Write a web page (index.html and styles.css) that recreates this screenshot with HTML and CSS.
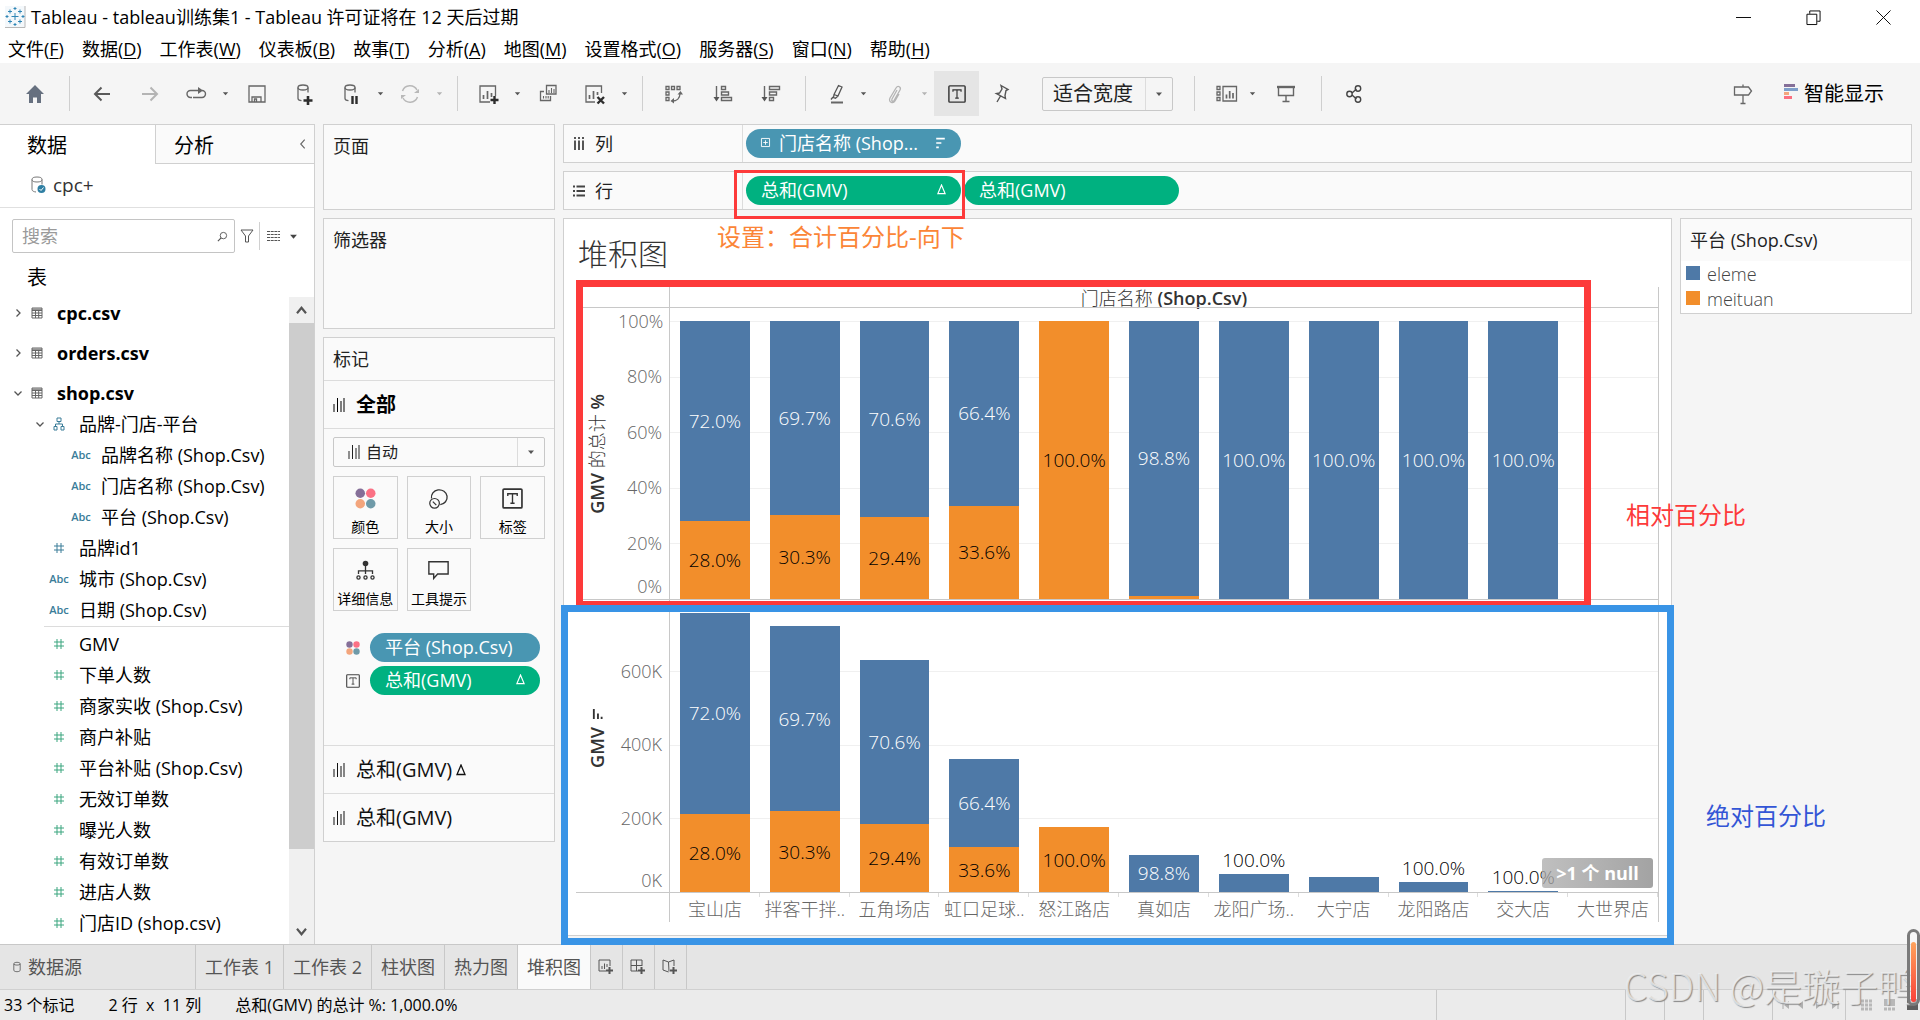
FILE: index.html
```html
<!DOCTYPE html>
<html lang="zh-CN">
<head>
<meta charset="utf-8">
<title>Tableau - tableau训练集1</title>
<link rel="stylesheet" href="styles.css">
</head>
<body>
<svg class="defs" aria-hidden="true">
  <symbol id="caret" viewBox="0 0 8 8"><path d="M1 2.500h6L4 6z" fill="currentColor"/></symbol>
  <symbol id="bars" viewBox="0 0 12 16"><path d="M1 7v8M4.500 1v14M8 4v11M11 1v14" stroke="currentColor" fill="none"/></symbol>
  <symbol id="hash" viewBox="0 0 12 12"><path d="M4 1v10M8 1v10M1 4h10M1 8h10" stroke="currentColor" fill="none"/></symbol>
  <symbol id="sheet" viewBox="0 0 12 12"><path d="M1 1h10v10H1zM1 3.500h10M1 6h10M1 8.500h10M4.500 3v8M7.700 3v8M1 2.200h10" stroke="#666" fill="none"/></symbol>
  <symbol id="chev-r" viewBox="0 0 10 10"><path d="M3.500 1.500L7 5 3.500 8.500" stroke="#555" fill="none" stroke-width="1.300"/></symbol>
  <symbol id="chev-d" viewBox="0 0 10 10"><path d="M1.500 3.500L5 7 8.500 3.500" stroke="#555" fill="none" stroke-width="1.300"/></symbol>
  <symbol id="dots" viewBox="0 0 22 22"><circle cx="5.500" cy="5.500" r="5" fill="#856f98"/><circle cx="16.500" cy="5.500" r="5" fill="#fb7185"/><circle cx="5.500" cy="16.500" r="5" fill="#f3a57c"/><circle cx="16.500" cy="16.500" r="5" fill="#6f9aa8"/></symbol>
  <symbol id="tbox" viewBox="0 0 20 20"><rect x="1" y="1" width="18" height="18" rx="1" fill="none" stroke="currentColor" stroke-width="1.600"/><path d="M5.500 7.500V5.500h9v2M10 5.500v9M8 14.500h4" fill="none" stroke="currentColor" stroke-width="1.300"/></symbol>
  <symbol id="delta" viewBox="0 0 10 12"><path d="M5 1L9 10.500H1z" fill="none" stroke="currentColor" stroke-width="1.300"/></symbol>
  <symbol id="bars-desc" viewBox="0 0 12 14"><path d="M1 2h10M1 7h6M1 12h3" stroke="currentColor" stroke-width="2" fill="none"/></symbol>
</svg>

<header class="titlebar">
  <svg class="logo" viewBox="0 0 20 22"><rect width="20" height="21" fill="#f4f8fb"/><path d="M20 0v21.500H0" fill="none" stroke="#b8b8b8"/><path d="M10 7v7M6.500 10.500h7M5 3.500v4M3 5.500h4M15 3.500v4M13 5.500h4M5 13.500v4M3 15.500h4M15 13.500v4M13 15.500h4M10 1v3M8.500 2.500h3M10 17v3M8.500 18.500h3M2 9v3M.500 10.500h3M18 9v3M16.500 10.500h3" stroke="#2f86b5" fill="none"/></svg>
  <h1 class="app-title">Tableau - tableau训练集1 - Tableau 许可证将在 12 天后过期</h1>
  <div class="window-buttons">
    <button aria-label="最小化"><svg viewBox="0 0 16 16"><path d="M0 8h16" stroke="#000" fill="none"/></svg></button>
    <button aria-label="还原"><svg viewBox="0 0 16 16"><path d="M1 4.500h10.500V15.500H1zM4 4V1h11v11h-3" stroke="#000" fill="none"/></svg></button>
    <button aria-label="关闭"><svg viewBox="0 0 16 16"><path d="M.500.500l15 15M15.500.500l-15 15" stroke="#000" fill="none"/></svg></button>
  </div>
</header>

<nav class="menubar">
  <button>文件(<u>F</u>)</button><button>数据(<u>D</u>)</button><button>工作表(<u>W</u>)</button><button>仪表板(<u>B</u>)</button><button>故事(<u>T</u>)</button><button>分析(<u>A</u>)</button><button>地图(<u>M</u>)</button><button>设置格式(<u>O</u>)</button><button>服务器(<u>S</u>)</button><button>窗口(<u>N</u>)</button><button>帮助(<u>H</u>)</button>
</nav>

<div class="toolbar">
  <div class="tools">
    <button aria-label="开始"><svg class="ic" viewBox="0 0 24 24"><path d="M12 3L3 12h3v9h4v-5.500h4V21h4v-9h3z" fill="#66707f"/></svg></button>
    <span class="sep"></span>
    <button aria-label="撤消"><svg class="ic" viewBox="0 0 24 24"><path d="M20 12H5M11.500 5.500L5 12l6.500 6.500" stroke="#5a5a5a" stroke-width="2" fill="none"/></svg></button>
    <button aria-label="重做"><svg class="ic" viewBox="0 0 24 24"><path d="M4 12h15M12.500 5.500L19 12l-6.500 6.500" stroke="#b4b4b4" stroke-width="2" fill="none"/></svg></button>
    <button aria-label="重播"><svg class="ic" viewBox="0 0 24 24"><path d="M8 15.500H6.500a3.500 3.500 0 010-7H15M18 8.500a3.500 3.500 0 010 7H9" stroke="#666" stroke-width="1.400" fill="none"/><path d="M14 5l5 3.500-5 3.500z" fill="#666"/></svg></button>
    <button class="drop" aria-label="更多"><svg><use href="#caret"/></svg></button>
    <button aria-label="保存"><svg class="ic" viewBox="0 0 24 24"><path d="M4 4h16v16H4zM7 20v-5h9v5M9.500 20v-3h2v3" stroke="#666" stroke-width="1.300" fill="none"/></svg></button>
    <button aria-label="新建数据源"><svg class="ic" viewBox="0 0 24 24"><ellipse cx="10" cy="5.500" rx="5" ry="2.500" fill="none" stroke="#666" stroke-width="1.300"/><path d="M5 5.500v11c0 1.200 1.500 2 3.500 2.200M15 5.500v5" stroke="#666" stroke-width="1.300" fill="none"/><path d="M15 14v9M10.500 18.500h9" stroke="#2d2d2d" stroke-width="2.600"/></svg></button>
    <button aria-label="暂停更新"><svg class="ic" viewBox="0 0 24 24"><ellipse cx="11" cy="5.500" rx="5" ry="2.500" fill="none" stroke="#666" stroke-width="1.300"/><path d="M6 5.500v11c0 1.200 1.500 2 3.500 2.200M16 5.500v5" stroke="#666" stroke-width="1.300" fill="none"/><path d="M13.500 14v8M17.500 14v8" stroke="#2d2d2d" stroke-width="2.400"/></svg></button>
    <button class="drop" aria-label="更多"><svg><use href="#caret"/></svg></button>
    <button aria-label="刷新"><svg class="ic" viewBox="0 0 24 24"><path d="M4.500 9a8 8 0 0114.500-1M19.500 15A8 8 0 015 16" stroke="#b8b8b8" stroke-width="1.500" fill="none"/><path d="M21 7v4h-5zM3 17v-4h5z" fill="#b8b8b8"/></svg></button>
    <button class="drop muted" aria-label="更多"><svg><use href="#caret"/></svg></button>
    <span class="sep"></span>
    <button aria-label="新建工作表"><svg class="ic" viewBox="0 0 24 24"><path d="M13 20H3V4h15.500v10" stroke="#666" stroke-width="1.300" fill="none"/><path d="M6.500 13v4M10.500 9v8M14.500 11v4" stroke="#666" stroke-width="1.700"/><path d="M17.500 14v8M13.500 18h8" stroke="#2d2d2d" stroke-width="2.400"/></svg></button>
    <button class="drop" aria-label="更多"><svg><use href="#caret"/></svg></button>
    <button aria-label="复制工作表"><svg class="ic" viewBox="0 0 24 24"><path d="M10.500 3.500H20V12h-9.500zM8 9.500H4.500v9h10V14" stroke="#666" stroke-width="1.300" fill="none"/><path d="M13 8v3M15.500 6v5M18 7v4M7.500 14v2.500M10 14v2.500M12.200 14v2.500" stroke="#666" stroke-width="1.100"/></svg></button>
    <button aria-label="清除工作表"><svg class="ic" viewBox="0 0 24 24"><path d="M12 20H3V4h15.500v7" stroke="#666" stroke-width="1.300" fill="none"/><path d="M6.500 13v4M10.500 9v8M14.500 10v3" stroke="#666" stroke-width="1.700"/><path d="M14.500 15l6.500 6.500M21 15l-6.500 6.500" stroke="#2d2d2d" stroke-width="2.400"/></svg></button>
    <button class="drop" aria-label="更多"><svg><use href="#caret"/></svg></button>
    <span class="sep"></span>
    <button aria-label="交换行和列"><svg class="ic" viewBox="0 0 24 24"><path d="M5 4.500h3v3H5zM10.500 4.500h3v3h-3zM16 4.500h3v3h-3zM5 10h3v3H5zM5 15.500h3v3H5zM11 19c5 0 8-3 8-7.500" stroke="#666" stroke-width="1.300" fill="none"/><path d="M16.500 12.500h5.500L19.500 9zM13 16l-3.500 3 3.500 2.500z" fill="#666"/></svg></button>
    <button aria-label="升序排序"><svg class="ic" viewBox="0 0 24 24"><path d="M5.500 4v13M10.500 4.500h4v3h-4zM10.500 10h7v3h-7zM10.500 15.500h10v3h-10z" stroke="#666" stroke-width="1.400" fill="none"/><path d="M2.500 15h6l-3 4.500z" fill="#555"/></svg></button>
    <button aria-label="降序排序"><svg class="ic" viewBox="0 0 24 24"><path d="M5.500 4v13M10.500 4.500h10v3h-10zM10.500 10h7v3h-7zM10.500 15.500h4v3h-4z" stroke="#666" stroke-width="1.400" fill="none"/><path d="M2.500 15h6l-3 4.500z" fill="#555"/></svg></button>
    <span class="sep"></span>
    <button aria-label="突出显示"><svg class="ic" viewBox="0 0 24 24"><path d="M9 12.500l4.500-9 3.500 1.500-4 9zM9 12.500l-.500 3 2 .800 2.500-2.300M8 15l-2 2.500" stroke="#555" stroke-width="1.300" fill="none"/><path d="M6 20.500h12" stroke="#666" stroke-width="2"/></svg></button>
    <button class="drop" aria-label="更多"><svg><use href="#caret"/></svg></button>
    <button aria-label="组成员"><svg class="ic" viewBox="0 0 24 24"><path d="M14 8l-5 9c-1 2 1 3 2 1.500l6-10.500c1.500-3-2-5-4-2L7 16c-2 4 3 6 5 3l4-7" stroke="#b4b4b4" stroke-width="1.300" fill="none"/></svg></button>
    <button class="drop muted" aria-label="更多"><svg><use href="#caret"/></svg></button>
    <button class="pressed" aria-label="显示标记标签"><svg class="ic20"><use href="#tbox"/></svg></button>
    <button aria-label="固定轴"><svg class="ic" viewBox="0 0 24 24"><path d="M11 3.500l7 4-2 1-1 5 .500 3-9-5 3-.500L12 7zM10.500 14L7 20" stroke="#555" stroke-width="1.400" fill="none"/></svg></button>
    <label class="fit"><select aria-label="适合"><option>适合宽度</option></select><svg><use href="#caret"/></svg></label>
    <span class="sep"></span>
    <button class="end-cell" aria-label="显示/隐藏卡"><svg class="ic" viewBox="0 0 24 24"><path d="M2 4.500h3v3H2zM2 10h3v3H2zM2 15.500h3v3H2zM8 4.500h13.500v14.500H8z" stroke="#666" stroke-width="1.300" fill="none"/><path d="M11.500 12.500v4M14.700 9v7.500M18 11v5.500" stroke="#666" stroke-width="1.700"/></svg></button>
    <button class="drop" aria-label="更多"><svg><use href="#caret"/></svg></button>
    <button aria-label="演示模式"><svg class="ic" viewBox="0 0 24 24"><path d="M3 5h18" stroke="#666" stroke-width="2.400"/><path d="M4.500 5v8.500h15V5M12 13.500V19M8.500 19.500h7" stroke="#666" stroke-width="1.400" fill="none"/></svg></button>
    <span class="sep"></span>
    <button aria-label="共享"><svg class="ic" viewBox="0 0 24 24"><path d="M10 11l4.500-4M10 13l4.500 4" stroke="#444" stroke-width="1.400"/><g fill="none" stroke="#444" stroke-width="1.400"><circle cx="7.500" cy="12" r="2.700"/><circle cx="16" cy="6.500" r="2.700"/><circle cx="16" cy="17.500" r="2.700"/></g></svg></button>
  </div>
  <button class="guide" aria-label="指南"><svg class="ic" viewBox="0 0 24 24"><path d="M3.500 5h14l3 4-3 4h-14zM12 2.500V5M12 13v8.500M9.500 21.500h5" stroke="#666" stroke-width="1.300" fill="none"/></svg></button>
  <button class="showme"><svg viewBox="0 0 14 16"><path d="M0 1.500h11" stroke="#856f98" stroke-width="3"/><path d="M0 5.500h14" stroke="#7f9fca" stroke-width="3"/><path d="M0 9.500h5" stroke="#f3a57c" stroke-width="3"/><path d="M0 13.500h8" stroke="#fb6f80" stroke-width="3"/></svg>智能显示</button>
</div>

<main class="workspace">
  <section class="data-pane">
    <div class="pane-tabs">
      <button class="tab-data">数据</button>
      <button class="tab-analysis"><span>分析</span><svg viewBox="0 0 8 12"><path d="M6.500 1L2 6l4.500 5" stroke="#666" stroke-width="1.300" fill="none"/></svg></button>
    </div>
    <div class="source"><svg viewBox="0 0 16 18"><ellipse cx="6" cy="3.500" rx="5" ry="2.500" fill="none" stroke="#777"/><path d="M1 3.500v10c0 1.500 2 2.300 4 2.500M11 3.500v5" stroke="#777" fill="none"/><circle cx="10.500" cy="13" r="4" fill="#2f7fa3"/><path d="M8.500 13l1.500 1.500 2.500-3" stroke="#fff" fill="none"/></svg>cpc+</div>
    <div class="search-row">
      <div class="search"><input type="text" placeholder="搜索" aria-label="搜索"><svg viewBox="0 0 12 12"><circle cx="7" cy="5" r="3.500" fill="none" stroke="#555"/><path d="M4.500 7.500L1 11" stroke="#555" stroke-width="1.300"/></svg></div>
      <button aria-label="筛选"><svg class="funnel" viewBox="0 0 14 14"><path d="M1 1h12L8.500 7v6h-3V7z" fill="none" stroke="#555"/></svg></button>
      <span class="vline"></span>
      <button class="view-as" aria-label="查看方式"><svg class="rows" viewBox="0 0 13 12"><path d="M0 1.500h13M0 4.500h13M0 7.500h13M0 10.500h13" stroke="#555" stroke-dasharray="3 .700"/></svg><svg class="car"><use href="#caret"/></svg></button>
    </div>
    <h2 class="tables-title">表</h2>
    <div class="tree-wrap">
      <ul class="tree">
        <li class="table"><svg class="chev"><use href="#chev-r"/></svg><i><svg><use href="#sheet"/></svg></i>cpc.csv</li>
        <li class="table"><svg class="chev"><use href="#chev-r"/></svg><i><svg><use href="#sheet"/></svg></i>orders.csv</li>
        <li class="table open"><svg class="chev"><use href="#chev-d"/></svg><i><svg><use href="#sheet"/></svg></i>shop.csv</li>
        <li class="group"><svg class="chev"><use href="#chev-d"/></svg><i><svg class="tall" viewBox="0 0 12 14"><path d="M4 1h4v3.500H4zM1 9.500h3V13H1zM8 9.500h3V13H8zM6 4.500V7M2.500 9.500V7h7v2.500" fill="none" stroke="currentColor"/></svg></i>品牌-门店-平台</li>
        <li class="leaf"><i>Abc</i>品牌名称 (Shop.Csv)</li>
        <li class="leaf"><i>Abc</i>门店名称 (Shop.Csv)</li>
        <li class="leaf"><i>Abc</i>平台 (Shop.Csv)</li>
        <li><i><svg><use href="#hash"/></svg></i>品牌id1</li>
        <li><i>Abc</i>城市 (Shop.Csv)</li>
        <li><i>Abc</i>日期 (Shop.Csv)</li>
        <li class="rule" role="separator"></li>
        <li class="measure"><i><svg><use href="#hash"/></svg></i>GMV</li>
        <li class="measure"><i><svg><use href="#hash"/></svg></i>下单人数</li>
        <li class="measure"><i><svg><use href="#hash"/></svg></i>商家实收 (Shop.Csv)</li>
        <li class="measure"><i><svg><use href="#hash"/></svg></i>商户补贴</li>
        <li class="measure"><i><svg><use href="#hash"/></svg></i>平台补贴 (Shop.Csv)</li>
        <li class="measure"><i><svg><use href="#hash"/></svg></i>无效订单数</li>
        <li class="measure"><i><svg><use href="#hash"/></svg></i>曝光人数</li>
        <li class="measure"><i><svg><use href="#hash"/></svg></i>有效订单数</li>
        <li class="measure"><i><svg><use href="#hash"/></svg></i>进店人数</li>
        <li class="measure"><i><svg><use href="#hash"/></svg></i>门店ID (shop.csv)</li>
      </ul>
      <div class="scrollbar">
        <button aria-label="向上滚动"><svg viewBox="0 0 12 10"><path d="M1 8l5-6 5 6" fill="none" stroke="#555" stroke-width="2.400"/></svg></button>
        <div class="thumb"></div>
        <button aria-label="向下滚动"><svg viewBox="0 0 12 10"><path d="M1 2l5 6 5-6" fill="none" stroke="#555" stroke-width="2.400"/></svg></button>
      </div>
    </div>
  </section>

  <section class="cards">
    <div class="card pages"><h2>页面</h2></div>
    <div class="card filters"><h2>筛选器</h2></div>
    <div class="card marks">
      <h2>标记</h2>
      <button class="layer active"><svg class="bars"><use href="#bars"/></svg>全部</button>
      <div class="marks-body">
        <label class="mark-type"><svg class="bars"><use href="#bars"/></svg><select aria-label="标记类型"><option>自动</option></select><svg class="car"><use href="#caret"/></svg></label>
        <div class="mark-buttons">
          <button><svg><use href="#dots"/></svg>颜色</button>
          <button><svg viewBox="0 0 24 24"><path d="M4 12a9 8.500 0 1110 7" fill="none" stroke="#333" stroke-width="1.500"/><circle cx="7.500" cy="17.500" r="5.500" fill="none" stroke="#333" stroke-width="1.400"/><path d="M5.500 15.500l4 4" stroke="#333" stroke-width="1.400"/></svg>大小</button>
          <button><svg><use href="#tbox"/></svg>标签</button>
          <button><svg viewBox="0 0 22 24"><circle cx="11" cy="4" r="3.200" fill="#333"/><path d="M11 6v10M3 16v-3.500h16V16" stroke="#333" stroke-width="1.500" fill="none"/><g fill="none" stroke="#333" stroke-width="1.500"><circle cx="3" cy="20" r="1.800"/><circle cx="11" cy="20" r="1.800"/><circle cx="19" cy="20" r="1.800"/></g></svg>详细信息</button>
          <button><svg viewBox="0 0 24 24"><path d="M1 2h22v14H11l-4.500 5v-5H1z" fill="none" stroke="#333" stroke-width="1.600"/></svg>工具提示</button>
        </div>
        <div class="mark-pill"><svg><use href="#dots"/></svg><button class="pill dim">平台 (Shop.Csv)</button></div>
        <div class="mark-pill"><svg><use href="#tbox"/></svg><button class="pill mea">总和(GMV)<svg class="end"><use href="#delta"/></svg></button></div>
      </div>
      <button class="layer"><svg class="bars"><use href="#bars"/></svg>总和(GMV)<svg class="delta"><use href="#delta"/></svg></button>
      <button class="layer"><svg class="bars"><use href="#bars"/></svg>总和(GMV)</button>
    </div>
  </section>

  <section class="sheet">
    <div class="shelf">
      <div class="shelf-name"><svg viewBox="0 0 12 14"><path d="M2 0v2M6 0v2M10 0v2M2 3.500V13M6 3.500V13M10 3.500V13" stroke="#444" stroke-width="1.800"/></svg>列</div>
      <div class="shelf-pills"><button class="pill dim"><svg class="plus" viewBox="0 0 10 10"><path d="M.500.500h9v9h-9zM5 2.500v5M2.500 5h5" stroke="#fff" fill="none"/></svg>门店名称 (Shop...<svg class="end sort"><use href="#bars-desc"/></svg></button></div>
    </div>
    <div class="shelf">
      <div class="shelf-name"><svg viewBox="0 0 12 14"><path d="M0 2.500h2M0 7h2M0 11.500h2M3.500 2.500H12M3.500 7H12M3.500 11.500H12" stroke="#444" stroke-width="1.800"/></svg>行</div>
      <div class="shelf-pills"><button class="pill mea">总和(GMV)<svg class="end"><use href="#delta"/></svg></button><button class="pill mea">总和(GMV)</button></div>
      <div class="box-rows"></div>
    </div>
    <div class="sheet-body">
      <div class="viz">
        <h2 class="viz-title">堆积图</h2>
        <div class="chart">
          <div class="col-title">门店名称 <b>(Shop.Csv)</b></div>
          <div class="axis-title upper"><span><b>GMV</b> 的总计 <b>%</b></span></div>
          <div class="axis pct"><span>100%</span><span>80%</span><span>60%</span><span>40%</span><span>20%<em>0%</em></span></div>
          <div class="plot pct-grid">
            <div class="lines"><s></s><s></s><s></s><s></s><s></s></div>
            <div class="bar" style="height:100%"><div class="e" style="height:72%">72.0%</div><div class="m" style="height:28%">28.0%</div></div>
            <div class="bar" style="height:100%"><div class="e" style="height:69.7%">69.7%</div><div class="m" style="height:30.3%">30.3%</div></div>
            <div class="bar" style="height:100%"><div class="e" style="height:70.6%">70.6%</div><div class="m" style="height:29.4%">29.4%</div></div>
            <div class="bar" style="height:100%"><div class="e" style="height:66.4%">66.4%</div><div class="m" style="height:33.6%">33.6%</div></div>
            <div class="bar" style="height:100%"><div class="m" style="height:100%">100.0%</div></div>
            <div class="bar" style="height:100%"><div class="e" style="height:98.8%">98.8%</div><div class="m" style="height:1.2%"></div></div>
            <div class="bar" style="height:100%"><div class="e" style="height:100%">100.0%</div></div>
            <div class="bar" style="height:100%"><div class="e" style="height:100%">100.0%</div></div>
            <div class="bar" style="height:100%"><div class="e" style="height:100%">100.0%</div></div>
            <div class="bar" style="height:100%"><div class="e" style="height:100%">100.0%</div></div>
            <div class="bar"></div>
          </div>
          <div class="axis-title lower"><span><b>GMV</b></span><svg viewBox="0 0 12 14"><path d="M2 1v11M6.500 6v6M10.500 9.500V12" stroke="#333" stroke-width="2"/></svg></div>
          <div class="axis abs"><span>600K</span><span>400K</span><span>200K<em>0K</em></span></div>
          <div class="plot abs-grid">
            <div class="lines"><s></s><s></s><s></s></div>
            <div class="bar" style="height:100%"><div class="e" style="height:72%">72.0%</div><div class="m" style="height:28%">28.0%</div></div>
            <div class="bar" style="height:95.3%"><div class="e" style="height:69.7%">69.7%</div><div class="m" style="height:30.3%">30.3%</div></div>
            <div class="bar" style="height:83.2%"><div class="e" style="height:70.6%">70.6%</div><div class="m" style="height:29.4%">29.4%</div></div>
            <div class="bar" style="height:47.7%"><div class="e" style="height:66.4%">66.4%</div><div class="m" style="height:33.6%">33.6%</div></div>
            <div class="bar" style="height:23.3%"><div class="m" style="height:100%">100.0%</div></div>
            <div class="bar" style="height:13.3%"><div class="e" style="height:100%">98.8%</div></div>
            <div class="bar out" style="height:6.5%"><p>100.0%</p><div class="e" style="height:100%"></div></div>
            <div class="bar" style="height:5.4%"><div class="e" style="height:100%"></div></div>
            <div class="bar out" style="height:3.6%"><p>100.0%</p><div class="e" style="height:100%"></div></div>
            <div class="bar out" style="height:0.5%"><p>100.0%</p><div class="e" style="height:100%"></div></div>
            <div class="bar"></div>
            <button class="nulls">&gt;1 个 null</button>
          </div>
          <div class="stores"><span>宝山店</span><span>拌客干拌..</span><span>五角场店</span><span>虹口足球..</span><span>怒江路店</span><span>真如店</span><span>龙阳广场..</span><span>大宁店</span><span>龙阳路店</span><span>交大店</span><span>大世界店</span></div>
        </div>
        <div class="box-upper"></div>
        <div class="box-lower"></div>
        <p class="note note-set">设置：合计百分比-向下</p>
      </div>
      <aside class="side">
        <div class="legend">
          <h2>平台 (Shop.Csv)</h2>
          <ul><li><span class="sw e"></span>eleme</li><li><span class="sw m"></span>meituan</li></ul>
        </div>
        <p class="note note-rel">相对百分比</p>
        <p class="note note-abs">绝对百分比</p>
      </aside>
    </div>
  </section>
</main>

<nav class="sheet-tabs">
  <button class="ds"><svg viewBox="0 0 10 14"><path d="M1 3c0-2.500 8-2.500 8 0v8c0 2.500-8 2.500-8 0zM1 3.500c1 1.500 7 1.500 8 0" fill="none" stroke="#555"/></svg>数据源</button>
  <button>工作表 1</button><button>工作表 2</button><button>柱状图</button><button>热力图</button><button class="on">堆积图</button>
  <button class="add" aria-label="新建工作表"><svg viewBox="0 0 16 16"><path d="M8 12H1V1h11v6M4 10V7M6.500 10V4.500M9 8V5" fill="none" stroke="#555"/><path d="M11.500 8v7M8 11.500h7" stroke="#555" stroke-width="2"/></svg></button>
  <button class="add" aria-label="新建仪表板"><svg viewBox="0 0 16 16"><path d="M8 12H1V1h11v6M1 6.500h11M6.500 1v11" fill="none" stroke="#555"/><path d="M11.500 8v7M8 11.500h7" stroke="#555" stroke-width="2"/></svg></button>
  <button class="add" aria-label="新建故事"><svg viewBox="0 0 16 16"><path d="M7 12.500L6.500 3 1 1v10l5.500 2M6.500 3L12 1v6" fill="none" stroke="#555"/><path d="M11.500 8v7M8 11.500h7" stroke="#555" stroke-width="2"/></svg></button>
</nav>
<footer class="status">
  <span>33 个标记</span><span>2 行&nbsp; x&nbsp; 11 列</span><span>总和(GMV) 的总计 %: 1,000.0%</span>
  <div class="status-cells">
    <div class="wide"></div><div></div><div></div><div class="mid"></div>
    <div class="nav"><svg viewBox="0 0 56 10"><path d="M1 1v8M56 1v8" stroke="#aaa"/><path d="M7 1v8L2 5zM21 1v8l-5-4zM34 1v8l5-4zM50 1v8l5-4z" fill="#b0b0b0"/></svg></div>
    <div class="views"><svg viewBox="0 0 58 12"><path d="M0 2h11M0 6h11M0 10h11" stroke="#b8b8b8" stroke-width="3" stroke-dasharray="3 1"/><path d="M23 0h11v7H23z" fill="#b8b8b8"/><path d="M23 10h11" stroke="#b8b8b8" stroke-width="3" stroke-dasharray="3 1"/><path d="M46 0h11v11H46z" fill="#5e5e5e"/></svg></div>
  </div>
</footer>
<div class="watermark">CSDN @是璇子鸭</div>
<div class="gauge"><span></span></div>
</body>
</html>
```
FILE: styles.css
```css
* { box-sizing: border-box; }
body {
  margin: 0;
  height: 100vh;
  display: flex;
  flex-direction: column;
  position: relative;
  overflow: hidden;
  background: #f5f5f5;
  color: #000;
  font-family: "Open Sans", "Noto Sans CJK SC", sans-serif;
  font-size: 18px;
  line-height: 24px;
}
h1, h2, p, ul { margin: 0; padding: 0; font-weight: 400; font-size: 18px; }
ul { list-style: none; }
button, input, select { font: inherit; color: inherit; border: 0; padding: 0; margin: 0; background: none; border-radius: 0; }
button { display: flex; align-items: center; justify-content: center; white-space: nowrap; }
select { appearance: none; outline: 0; }
svg { display: block; flex: none; overflow: visible; }
i, em { font-style: normal; }
.defs { position: absolute; width: 0; height: 0; }

/* title and menu */
.titlebar { flex: none; height: 34px; display: flex; align-items: center; background: #fff; padding-left: 5px; }
.logo { width: 20px; height: 22px; margin-right: 6px; }
.app-title { flex: 1; }
.window-buttons { display: flex; padding-right: 2px; }
.window-buttons button { width: 70px; height: 34px; }
.window-buttons svg { width: 15px; height: 15px; }
.menubar { flex: none; height: 29px; display: flex; gap: 18px; padding: 1px 8px 0; background: #fff; }
.menubar u { text-underline-offset: 2px; }

/* toolbar */
.toolbar { flex: none; height: 61px; display: flex; align-items: center; }
.tools {
  flex: 1;
  height: 45px;
  display: grid;
  align-items: center;
  justify-items: center;
  padding-left: 10px;
  grid-template-columns: 50px 18px 48px 48px 44px 14px 50px 46px 46px 12px 48px 10px 26px 38px 18px 44px 50px 8px 28px 34px 66px 30px 38px 26px 26px 38px 20px 45px 46px 165px 8px 41px 26px 42px 28px 38px;
}
.ic { width: 24px; height: 24px; }
.ic20 { width: 18px; height: 18px; }
.sep { width: 1px; height: 35px; background: #cfcfcf; }
.end-cell { justify-self: end; }
.drop { color: #555; }
.drop svg { width: 7px; height: 7px; }
.muted { color: #b4b4b4; }
.pressed { width: 45px; height: 45px; background: #e5e5e5; color: #333; }
.fit { display: flex; align-items: center; width: 131px; height: 34px; border: 1px solid #c8c8c8; border-radius: 2px; font-size: 20px; color: #222; }
.fit select { flex: 1; min-width: 0; height: 32px; padding-left: 10px; border-right: 1px solid #dcdcdc; }
.fit svg { width: 8px; height: 8px; margin: 0 9px; color: #555; }
.guide { margin-right: 29px; }
.showme { gap: 6px; font-size: 20px; margin-right: 36px; }
.showme svg { width: 14px; height: 16px; margin-bottom: 3px; }

/* workspace */
.workspace { flex: 1; min-height: 0; display: flex; gap: 8px; padding-right: 8px; }
.data-pane { flex: none; width: 315px; display: flex; flex-direction: column; background: #fff; border-top: 1px solid #d0d0d0; border-right: 1px solid #d0d0d0; }
.pane-tabs { display: flex; height: 39px; font-size: 20px; }
.tab-data { width: 155px; justify-content: flex-start; padding: 2px 0 0 27px; }
.tab-analysis { flex: 1; justify-content: space-between; padding: 0 8px 0 18px; background: #fafafa; border-left: 1px solid #d0d0d0; border-bottom: 1px solid #d0d0d0; }
.tab-analysis span { padding-top: 3px; }
.tab-analysis svg { width: 7px; height: 12px; }
.source { height: 44px; display: flex; align-items: center; gap: 6px; padding: 0 0 2px 31px; font-size: 19px; color: #333; border-bottom: 1px solid #e0e0e0; }
.source svg { width: 16px; height: 18px; }
.search-row { display: flex; align-items: center; margin-top: 11px; padding-left: 12px; gap: 5px; }
.search { display: flex; align-items: center; width: 223px; height: 34px; border: 1px solid #c4c4c4; border-radius: 2px; padding: 0 6px 0 9px; }
.search input { flex: 1; min-width: 0; outline: 0; }
.search input::placeholder { color: #9a9a9a; }
.search svg { width: 11px; height: 11px; }
.funnel { width: 14px; height: 14px; }
.vline { width: 1px; height: 28px; background: #d0d0d0; }
.view-as { gap: 9px; color: #444; padding-left: 2px; }
.rows { width: 13px; height: 12px; }
.car { width: 9px; height: 9px; }
.tables-title { height: 44px; padding: 13px 0 0 27px; font-size: 20px; }
.tree-wrap { flex: 1; min-height: 0; display: flex; }
.tree { flex: 1; overflow: hidden; }
.tree li { display: flex; align-items: center; height: 31px; padding-left: 47px; white-space: nowrap; }
.tree i { flex: none; width: 24px; margin-right: 8px; display: flex; justify-content: center; font-size: 11px; font-weight: 600; color: #3a7c98; }
.tree i svg { width: 12px; height: 12px; }
.tree i .tall { height: 14px; }
.tree .chev { width: 10px; height: 10px; margin: 0 2px; }
.tree .table { padding-left: 11px; margin-bottom: 9px; font-weight: 700; }
.tree .open { margin-bottom: 0; }
.tree .group { padding-left: 33px; }
.tree .leaf { padding-left: 69px; }
.tree .measure i { color: #3aa57f; }
.tree .rule { height: 1px; margin: 1px 0 1px 44px; background: #dcdcdc; }
.scrollbar { flex: none; width: 25px; display: flex; flex-direction: column; background: #f0f0f0; }
.scrollbar button { height: 26px; flex: none; }
.scrollbar svg { width: 11px; height: 9px; }
.thumb { height: 526px; background: #cdcdcd; }
.scrollbar button:last-child { margin-top: auto; height: 26px; }

/* cards */
.cards { flex: none; width: 232px; display: flex; flex-direction: column; gap: 8px; }
.card { background: #fafafa; border: 1px solid #d0d0d0; color: #222; }
.card h2 { padding: 9px 9px; }
.pages { height: 86px; }
.filters { height: 111px; }
.layer { width: 100%; height: 48px; justify-content: flex-start; padding-left: 9px; border-top: 1px solid #dcdcdc; font-size: 20px; color: #111; }
.layer.active { font-weight: 700; color: #000; }
.bars { width: 12px; height: 16px; }
.layer .bars { margin-right: 11px; }
.delta { width: 10px; height: 12px; margin-left: 4px; }
.marks-body { height: 317px; padding: 8px 9px 0; border-top: 1px solid #dcdcdc; }
.mark-type { display: flex; align-items: center; height: 30px; padding-left: 14px; border: 1px solid #c8c8c8; border-radius: 2px; font-size: 16px; }
.mark-type select { flex: 1; height: 28px; padding-left: 6px; border-right: 1px solid #dcdcdc; }
.mark-type .car { width: 8px; height: 8px; margin: 0 9px; color: #555; }
.mark-buttons { display: grid; grid-template-columns: repeat(3, 1fr); gap: 9px; margin: 9px 0 22px; }
.mark-buttons button { height: 63px; flex-direction: column; justify-content: flex-end; gap: 8px; padding-bottom: 1px; border: 1px solid #d0d0d0; font-size: 14px; line-height: 20px; color: #000; }
.mark-buttons svg { width: 21px; height: 21px; color: #333; }
.mark-pill { display: flex; align-items: center; margin-bottom: 4px; padding: 0 5px 0 13px; gap: 10px; color: #444; }
.mark-pill > svg { width: 14px; height: 14px; }
.pill { height: 29px; border-radius: 15px; padding: 0 15px 2px; color: #fff; justify-content: flex-start; }
.mark-pill .pill { flex: 1; }
.dim { background: #4996b2; }
.mea { background: #00b180; }
.pill .end { width: 9px; height: 11px; margin-left: auto; }
.pill .sort { width: 11px; height: 12px; }
.plus { width: 9px; height: 9px; margin-right: 9px; }

/* shelves */
.sheet { flex: 1; min-width: 0; display: flex; flex-direction: column; gap: 8px; padding-bottom: 8px; }
.shelf { flex: none; position: relative; height: 39px; display: flex; background: #fafafa; border: 1px solid #d0d0d0; }
.shelf-name { width: 179px; display: flex; align-items: center; gap: 10px; padding-left: 9px; border-right: 1px solid #dcdcdc; color: #222; }
.shelf-name svg { width: 12px; height: 14px; }
.shelf-pills { display: flex; align-items: center; gap: 3px; padding-left: 3px; }
.shelf-pills .pill { width: 215px; }
.box-rows { position: absolute; left: 170px; top: -2px; width: 231px; height: 49px; border: 3px solid #fd3a3a; z-index: 2; }

/* sheet */
.sheet-body { flex: 1; min-height: 0; display: flex; gap: 8px; }
.viz { flex: 1; min-width: 0; position: relative; display: flex; flex-direction: column; padding: 0 12px 13px; background: #fff; border: 1px solid #d0d0d0; }
.viz-title { flex: none; height: 68px; padding: 17px 0 0 2px; font-size: 30px; line-height: 36px; font-weight: 300; color: #333; }
.chart { flex: 1; min-height: 0; display: grid; grid-template-columns: 42px 51px 1fr; grid-template-rows: 20px 1fr 1fr 29px; color: #666; }
.col-title { grid-column: 3; font-size: 18px; line-height: 22px; text-align: center; color: #333; font-weight: 300; border-left: 1px solid #c8c8c8; border-right: 1px solid #c8c8c8; }
.chart b { font-weight: 600; }
.axis-title { display: flex; flex-direction: column; align-items: center; justify-content: center; font-size: 18px; line-height: 22px; color: #333; font-weight: 300; }
.axis-title span { writing-mode: vertical-rl; text-orientation: sideways; transform: rotate(180deg); }
.upper { border-top: 1px solid #c8c8c8; border-bottom: 1px solid #c8c8c8; }
.lower { flex-direction: column-reverse; gap: 6px; padding-bottom: 16px; border-bottom: 1px solid #c8c8c8; }
.lower svg { width: 11px; height: 13px; }
.axis { display: flex; flex-direction: column; text-align: right; line-height: 18px; padding-right: 7px; border-bottom: 1px solid #c8c8c8; font-weight: 300; }
.axis span { display: flex; flex-direction: column; justify-content: space-between; }
.axis span:last-child { flex: 1; }
.pct { padding-top: 4px; padding-bottom: 4px; border-top: 1px solid #c8c8c8; }
.pct span { flex: 0 0 calc((100% - 6px) / 5); }
.abs { padding-top: 62px; padding-bottom: 3px; }
.abs span { flex: 0 0 calc((100% - 7px) / 3); }
.plot { position: relative; display: grid; grid-template-columns: repeat(11, 1fr); align-items: end; padding-top: 13px; border-left: 1px solid #c8c8c8; border-right: 1px solid #c8c8c8; border-bottom: 1px solid #c8c8c8; }
.pct-grid { border-top: 1px solid #c8c8c8; }
.lines { position: absolute; inset: 13px 0 0; display: flex; flex-direction: column; }
.lines s { flex: 1; border-top: 1px solid #f0f0f0; }
.abs-grid .lines { top: 71px; }
.bar { position: relative; margin: 0 10px; font-size: 19px; font-weight: 300; }
.bar div { display: flex; align-items: center; justify-content: center; }
.e { background: #4e79a7; color: #fff; }
.m { background: #f28e2b; color: #000; }
.out p { position: absolute; bottom: 100%; left: 0; right: 0; text-align: center; color: #000; padding-bottom: 2px; font-size: 19px; font-weight: 300; }
.nulls { position: absolute; right: 5px; bottom: 4px; width: 111px; height: 30px; border-radius: 3px; background: linear-gradient(90deg, rgba(170, 170, 170, .75), rgba(158, 158, 158, .95)); color: #fff; font-weight: 700; }
.stores { grid-column: 3; display: grid; grid-template-columns: repeat(11, 1fr); border-left: 1px solid #c8c8c8; border-right: 1px solid #c8c8c8; font-weight: 300; }
.stores span { text-align: center; white-space: nowrap; padding-top: 4px; background: linear-gradient(#ddd, #ddd) right top / 1px 4px no-repeat; }

/* annotations */
.box-upper { position: absolute; left: 12px; top: 61px; right: 80px; height: 328px; border: 7px solid #fd3a3a; }
.box-lower { position: absolute; left: -3px; top: 386px; right: -3px; bottom: -10px; border: 7px solid #3994e6; z-index: 2; }
.note { font-size: 24px; line-height: 32px; white-space: nowrap; position: absolute; }
.note-set { left: 153px; top: 2px; color: #fb8537; }
.side { position: relative; flex: none; width: 232px; }
.note-rel { right: 166px; top: 281px; color: #fd3a3a; }
.note-abs { right: 86px; top: 582px; color: #3355d6; }
.legend { border: 1px solid #d0d0d0; background: #fff; }
.legend h2 { height: 42px; padding: 9px; background: #fafafa; color: #222; }
.legend ul { padding: 0 5px 2px; }
.legend li { display: flex; align-items: center; gap: 7px; height: 25px; color: #444; font-weight: 300; }
.sw { width: 14px; height: 14px; margin-bottom: 2px; }

/* bottom */
.sheet-tabs { flex: none; height: 46px; display: flex; background: #e5e5e5; border-top: 1px solid #c8c8c8; border-bottom: 1px solid #d0d0d0; color: #555; }
.sheet-tabs button { padding: 0 9px; border-right: 1px solid #c8c8c8; }
.sheet-tabs .ds { width: 196px; justify-content: flex-start; gap: 7px; padding-left: 13px; }
.ds svg { width: 8px; height: 12px; }
.sheet-tabs .on { background: #fafafa; }
.sheet-tabs .add { width: 32px; padding: 0; }
.add svg { width: 16px; height: 16px; }
.status { flex: none; height: 30px; display: flex; align-items: center; gap: 34px; padding-left: 4px; background: #ebebeb; font-size: 16px; }
.status-cells { margin-left: auto; height: 100%; display: flex; }
.status-cells div { width: 39px; border-left: 1px solid #c8c8c8; display: flex; align-items: center; }
.status-cells .wide { width: 189px; }
.status-cells .mid { width: 69px; }
.status-cells .nav { width: 73px; padding-left: 9px; }
.status-cells .views { width: 75px; padding-left: 15px; }
.nav svg { width: 56px; height: 10px; }
.views svg { width: 58px; height: 12px; }
.watermark { position: absolute; right: 4px; bottom: 9px; font-family: "Noto Sans CJK SC", sans-serif; font-size: 38px; line-height: 52px; font-weight: 300; color: rgba(240, 240, 240, .8); text-shadow: 1px 1px 1px #888; white-space: nowrap; z-index: 3; }
.gauge { position: absolute; right: 0; bottom: 14px; width: 13px; height: 77px; border: 3px solid #7a7a7a; border-radius: 7px; background: rgba(250, 250, 250, .5); padding: 10px 1px 1px; z-index: 4; }
.gauge span { display: block; height: 100%; border-radius: 3px; background: linear-gradient(#ffa35c, #f9423a); }
```
